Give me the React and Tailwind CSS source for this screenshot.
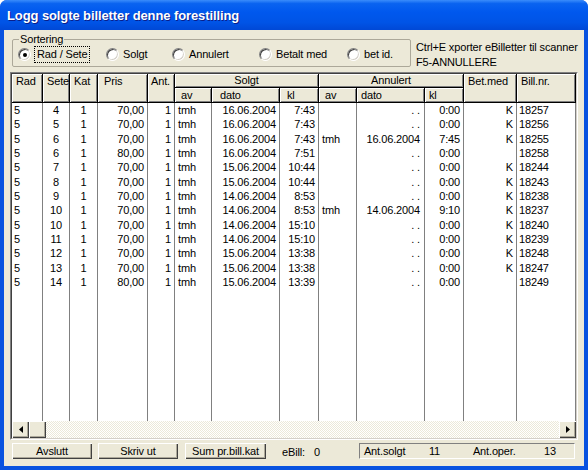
const cols = [
  { key: "rad", w: "w-[31px]", align: "text-left pl-[2px]" },
  { key: "sete", w: "w-[27px]", align: "text-center" },
  { key: "kat", w: "w-[28px]", align: "text-center" },
  { key: "pris", w: "w-[50px]", align: "text-right pr-[3px]" },
  { key: "ant", w: "w-[27px]", align: "text-right pr-[3px]" },
  { key: "sav", w: "w-[37px]", align: "text-left pl-[3px]" },
  { key: "sdato", w: "w-[68px]", align: "text-right pr-[3px]" },
  { key: "skl", w: "w-[39px]", align: "text-right pr-[3px]" },
  { key: "aav", w: "w-[38px]", align: "text-left pl-[3px]" },
  { key: "adato", w: "w-[68px]", align: "text-right pr-[4px]" },
  { key: "akl", w: "w-[39px]", align: "text-right pr-[3px]" },
  { key: "bet", w: "w-[53px]", align: "text-right pr-[3px]" },
  { key: "bill", w: "w-[59px]", align: "text-left pl-[2px]" },
];

const rows = [
  ["5", "4", "1", "70,00", "1", "tmh", "16.06.2004", "7:43", "", ". .", "0:00", "K", "18257"],
  ["5", "5", "1", "70,00", "1", "tmh", "16.06.2004", "7:43", "", ". .", "0:00", "K", "18256"],
  ["5", "6", "1", "70,00", "1", "tmh", "16.06.2004", "7:43", "tmh", "16.06.2004", "7:45", "K", "18255"],
  ["5", "6", "1", "80,00", "1", "tmh", "16.06.2004", "7:51", "", ". .", "0:00", "", "18258"],
  ["5", "7", "1", "70,00", "1", "tmh", "15.06.2004", "10:44", "", ". .", "0:00", "K", "18244"],
  ["5", "8", "1", "70,00", "1", "tmh", "15.06.2004", "10:44", "", ". .", "0:00", "K", "18243"],
  ["5", "9", "1", "70,00", "1", "tmh", "14.06.2004", "8:53", "", ". .", "0:00", "K", "18238"],
  ["5", "10", "1", "70,00", "1", "tmh", "14.06.2004", "8:53", "tmh", "14.06.2004", "9:10", "K", "18237"],
  ["5", "10", "1", "70,00", "1", "tmh", "14.06.2004", "15:10", "", ". .", "0:00", "K", "18240"],
  ["5", "11", "1", "70,00", "1", "tmh", "14.06.2004", "15:10", "", ". .", "0:00", "K", "18239"],
  ["5", "12", "1", "70,00", "1", "tmh", "15.06.2004", "13:38", "", ". .", "0:00", "K", "18248"],
  ["5", "13", "1", "70,00", "1", "tmh", "15.06.2004", "13:38", "", ". .", "0:00", "K", "18247"],
  ["5", "14", "1", "80,00", "1", "tmh", "15.06.2004", "13:39", "", ". .", "0:00", "", "18249"],
];

const hcell =
  "bg-[#ECE9D8] border-r border-b border-black shadow-[inset_1px_1px_#fff,inset_-1px_-1px_#808080] overflow-hidden whitespace-nowrap";

function Radio({ checked }) {
  return (
    <span className="relative inline-flex h-[13px] w-[13px] shrink-0 items-center justify-center rounded-full border border-t-[#808080] border-l-[#808080] border-r-white border-b-white bg-white shadow-[inset_1px_1px_#404040,inset_-1px_-1px_#d4d0c8]">
      {checked && <span className="h-[4px] w-[4px] rounded-full bg-black" />}
    </span>
  );
}

function Btn({ children, w }) {
  return (
    <div
      className={`${w} flex h-[16px] items-center justify-center bg-[#ECE9D8] shadow-[inset_1px_1px_#fff,inset_-1px_-1px_#404040,inset_-2px_-2px_#aca899]`}
    >
      {children}
    </div>
  );
}

function ScrollBtn({ dir }) {
  return (
    <div className="flex h-[17px] w-[17px] items-center justify-center bg-[#ECE9D8] shadow-[inset_1px_1px_#fff,inset_-1px_-1px_#404040,inset_-2px_-2px_#aca899]">
      {dir === "left" ? (
        <svg width="4" height="7" viewBox="0 0 4 7">
          <path d="M4 0 L0 3.5 L4 7 Z" fill="#000" />
        </svg>
      ) : dir === "right" ? (
        <svg width="4" height="7" viewBox="0 0 4 7">
          <path d="M0 0 L4 3.5 L0 7 Z" fill="#000" />
        </svg>
      ) : null}
    </div>
  );
}

export default function App() {
  return (
    <div className="h-[470px] w-[588px] bg-white font-['Liberation_Sans',Arial,sans-serif] text-[11px] tracking-[-0.15px] text-black">
      <div className="flex h-full flex-col overflow-hidden rounded-t-[7px] bg-[#0852e0]">
        {/* title bar */}
        <div className="flex h-[30px] items-center bg-[linear-gradient(180deg,#3a8cfb_0%,#0a63f0_12%,#0058ee_40%,#0054e6_75%,#0048d6_100%)] pl-[7px] pt-[1px]">
          <span className="text-[13px] font-bold tracking-[-0.1px] text-white [text-shadow:1px_1px_#0a1e8a]">
            Logg solgte billetter denne forestilling
          </span>
        </div>

        <div className="mx-[4px] mb-[4px] flex flex-1 flex-col bg-[#ECE9D8]">
          {/* top section */}
          <div className="flex h-[42px] pl-[8px] pt-[3px]">
            <fieldset className="h-[34px] w-[399px] rounded-[2px] border border-[#aca899] px-0">
              <legend className="ml-[6px] px-[1px] leading-[12px]">Sortering</legend>
              <div className="mt-[1px] flex items-center pl-[5px]">
                <div className="flex w-[88px] items-center">
                  <Radio checked />
                  <span className="ml-[3px] border border-dotted border-black px-[2px] leading-[15px]">Rad / Sete</span>
                </div>
                <div className="flex w-[66px] items-center">
                  <Radio />
                  <span className="ml-[4px]">Solgt</span>
                </div>
                <div className="flex w-[87px] items-center">
                  <Radio />
                  <span className="ml-[4px]">Annulert</span>
                </div>
                <div className="flex w-[88px] items-center">
                  <Radio />
                  <span className="ml-[4px]">Betalt med</span>
                </div>
                <div className="flex items-center">
                  <Radio />
                  <span className="ml-[4px]">bet id.</span>
                </div>
              </div>
            </fieldset>
            <div className="ml-[5px] mt-[7px] leading-[15px]">
              <div>Ctrl+E xporter eBilletter til scanner</div>
              <div>F5-ANNULLERE</div>
            </div>
          </div>

          {/* grid */}
          <div className="ml-[6px] h-[368px] w-[568px] border border-t-[#808080] border-l-[#808080] border-r-white border-b-white">
            <div className="flex h-full w-full flex-col overflow-hidden border border-t-[#404040] border-l-[#404040] border-r-[#d4d0c8] border-b-[#d4d0c8] bg-white">
              {/* header */}
              <div className="flex h-[29px] shrink-0">
                <div className={`${hcell} w-[31px] pl-[4px] leading-[14px]`}>Rad</div>
                <div className={`${hcell} w-[27px] pl-[4px] leading-[14px]`}>Sete</div>
                <div className={`${hcell} w-[28px] pl-[4px] leading-[14px]`}>Kat</div>
                <div className={`${hcell} w-[50px] pl-[6px] leading-[14px]`}>Pris</div>
                <div className={`${hcell} w-[27px] pl-[3px] leading-[14px]`}>Ant.</div>
                <div className="flex w-[144px] flex-col">
                  <div className={`${hcell} h-[14px] text-center leading-[13px]`}>Solgt</div>
                  <div className="flex h-[15px]">
                    <div className={`${hcell} w-[37px] pl-[6px] leading-[14px]`}>av</div>
                    <div className={`${hcell} w-[68px] pl-[8px] leading-[14px]`}>dato</div>
                    <div className={`${hcell} w-[39px] pl-[7px] leading-[14px]`}>kl</div>
                  </div>
                </div>
                <div className="flex w-[145px] flex-col">
                  <div className={`${hcell} h-[14px] text-center leading-[13px]`}>Annulert</div>
                  <div className="flex h-[15px]">
                    <div className={`${hcell} w-[38px] pl-[6px] leading-[14px]`}>av</div>
                    <div className={`${hcell} w-[68px] pl-[4px] leading-[14px]`}>dato</div>
                    <div className={`${hcell} w-[39px] pl-[4px] leading-[14px]`}>kl</div>
                  </div>
                </div>
                <div className={`${hcell} w-[53px] pl-[4px] leading-[14px]`}>Bet.med</div>
                <div className={`${hcell} w-[59px] pl-[4px] leading-[14px]`}>Bill.nr.</div>
              </div>

              {/* body */}
              <div className="flex h-[318px] shrink-0 flex-col">
                {rows.map((r, i) => (
                  <div key={i} className="flex h-[14.33px] shrink-0">
                    {cols.map((c, j) => (
                      <div
                        key={c.key}
                        className={`${c.w} ${c.align} overflow-hidden whitespace-nowrap border-r border-[#808080] leading-[14.33px]`}
                      >
                        {r[j]}
                      </div>
                    ))}
                  </div>
                ))}
                <div className="flex flex-1">
                  {cols.map((c) => (
                    <div key={c.key} className={`${c.w} border-r border-[#808080]`} />
                  ))}
                </div>
              </div>

              {/* horizontal scrollbar */}
              <div className="flex h-[17px] shrink-0">
                <ScrollBtn dir="left" />
                <ScrollBtn />
                <div className="flex-1 bg-[repeating-conic-gradient(#ece9d8_0_25%,#ffffff_0_50%)] bg-[length:2px_2px]" />
                <ScrollBtn dir="right" />
              </div>
            </div>
          </div>

          {/* bottom bar */}
          <div className="mt-[2px] flex items-center pl-[8px]">
            <Btn w="w-[80px]">Avslutt</Btn>
            <div className="ml-[6px]">
              <Btn w="w-[80px]">Skriv ut</Btn>
            </div>
            <div className="ml-[7px]">
              <Btn w="w-[81px]">Sum pr.bill.kat</Btn>
            </div>
            <span className="ml-[16px] mt-[2px]">eBill:</span>
            <span className="ml-[9px] mt-[2px]">0</span>
            <div className="ml-[39px] flex h-[16px] w-[216px] items-center border border-t-[#808080] border-l-[#808080] border-r-white border-b-white pl-[4px]">
              <span className="w-[65px]">Ant.solgt</span>
              <span className="w-[44px]">11</span>
              <span className="w-[71px]">Ant.oper.</span>
              <span>13</span>
            </div>
          </div>
        </div>
      </div>
    </div>
  );
}
